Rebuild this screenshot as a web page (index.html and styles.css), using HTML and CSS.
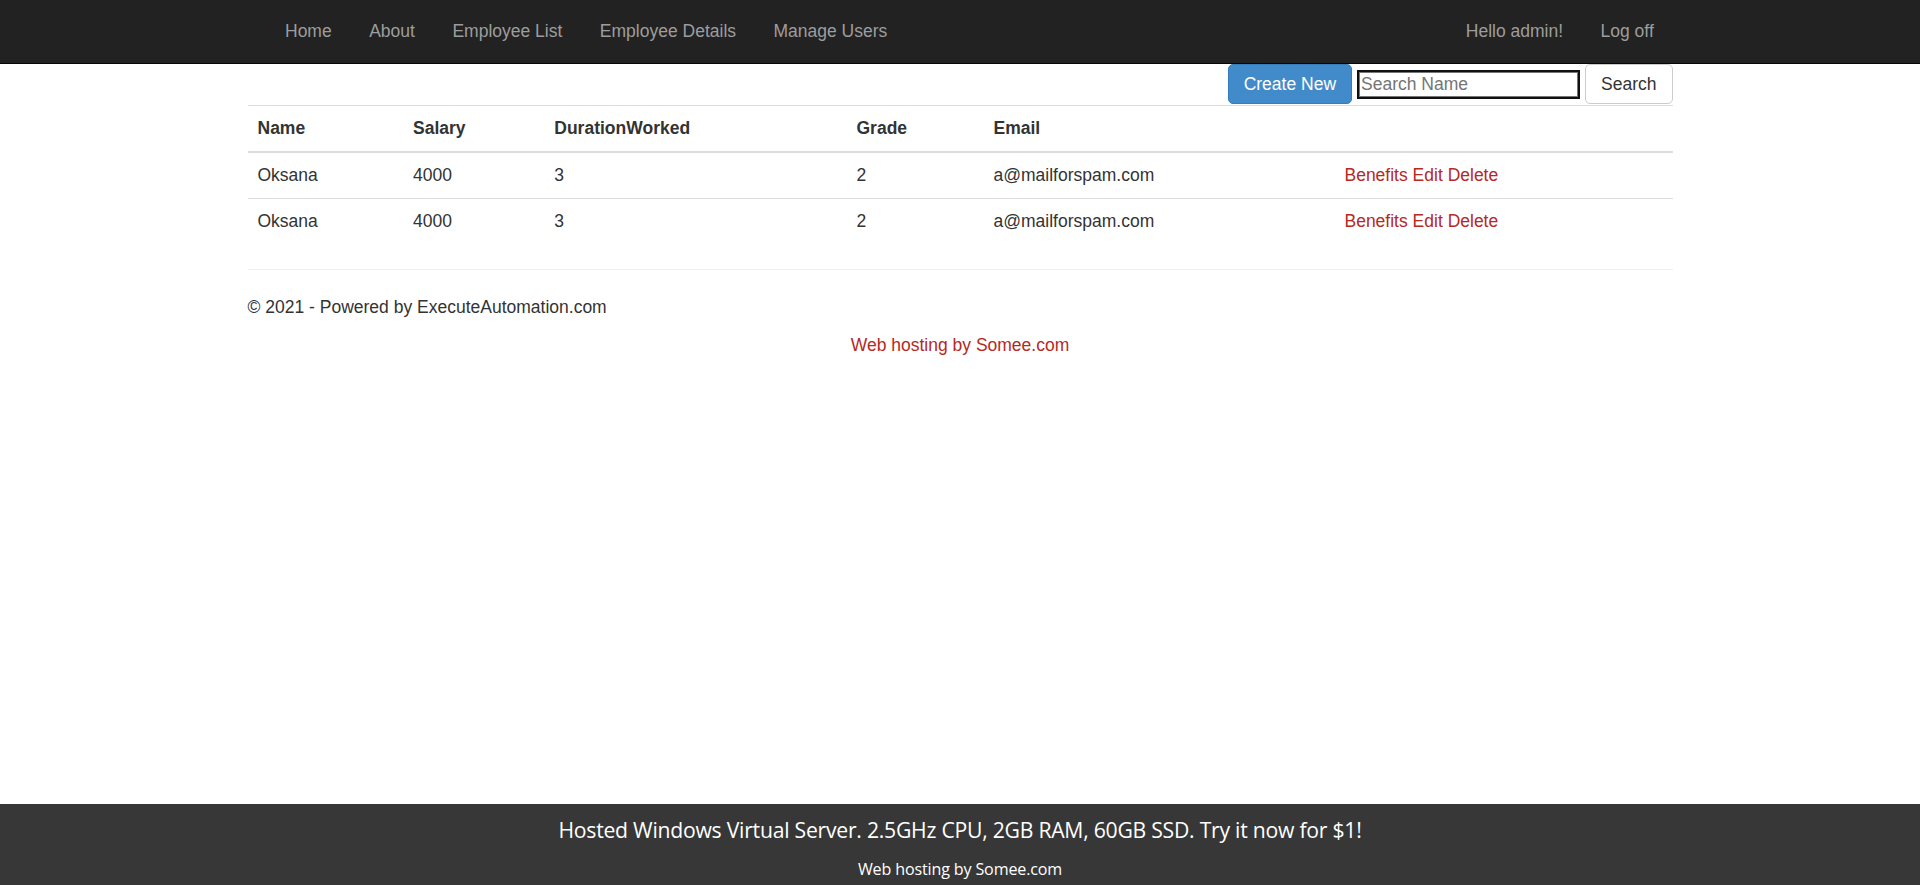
FILE: index.html
```html
<!DOCTYPE html>
<html lang="en">
<head>
<meta charset="utf-8">
<title>Employee List</title>
<link rel="stylesheet" href="styles.css">
</head>
<body>
<div class="page">
  <nav class="navbar">
    <div class="container nav-inner">
      <ul class="nav">
        <li><a href="#">Home</a></li>
        <li><a href="#">About</a></li>
        <li><a href="#">Employee List</a></li>
        <li><a href="#">Employee Details</a></li>
        <li><a href="#">Manage Users</a></li>
      </ul>
      <ul class="nav nav-right">
        <li><a href="#">Hello admin!</a></li>
        <li><a href="#">Log off</a></li>
      </ul>
    </div>
  </nav>

  <main class="container body-content">
    <form class="toolbar">
      <a class="btn btn-primary" href="#">Create New</a>
      <input class="search-input" type="text" placeholder="Search Name">
      <button class="btn btn-default" type="button">Search</button>
    </form>

    <table class="table">
      <colgroup>
        <col class="c-name"><col class="c-salary"><col class="c-dur"><col class="c-grade"><col class="c-email"><col class="c-act">
      </colgroup>
      <thead>
        <tr><th>Name</th><th>Salary</th><th>DurationWorked</th><th>Grade</th><th>Email</th><th></th></tr>
      </thead>
      <tbody>
        <tr><td>Oksana</td><td>4000</td><td>3</td><td>2</td><td>a@mailforspam.com</td><td><a href="#">Benefits</a> <a href="#">Edit</a> <a href="#">Delete</a></td></tr>
        <tr><td>Oksana</td><td>4000</td><td>3</td><td>2</td><td>a@mailforspam.com</td><td><a href="#">Benefits</a> <a href="#">Edit</a> <a href="#">Delete</a></td></tr>
      </tbody>
    </table>

    <hr class="rule">
    <footer class="site-footer">
      <p>&copy; 2021 - Powered by ExecuteAutomation.com</p>
    </footer>
  </main>

  <div class="somee-link"><a href="#">Web hosting by Somee.com</a></div>

  <div class="ad-bar">
    <div class="ad-title">Hosted Windows Virtual Server. 2.5GHz CPU, 2GB RAM, 60GB SSD. Try it now for $1!</div>
    <div class="ad-sub">Web hosting by Somee.com</div>
  </div>
</div>
</body>
</html>
```

FILE: styles.css
```css
* { box-sizing: border-box; }

html, body {
  margin: 0;
  padding: 0;
}

body {
  font-family: "Liberation Sans", Arial, Helvetica, sans-serif;
  font-size: 17.5px;
  line-height: 25px;
  color: #333;
  background: #fff;
}

a {
  color: #b5291f;
  text-decoration: none;
}

.page {
  min-height: 100vh;
  display: flex;
  flex-direction: column;
}

.container {
  width: 1462.5px;
  margin: 0 auto;
  padding: 0 18.75px;
}

/* navbar */
.navbar {
  background: #222;
  border-bottom: 1px solid #080808;
  height: 63.5px;
}

.nav-inner {
  display: flex;
  justify-content: space-between;
  padding-left: 37.5px;
}

.nav {
  list-style: none;
  margin: 0;
  padding: 0;
  display: flex;
}

.nav a {
  display: block;
  padding: 18.75px 18.75px;
  line-height: 25px;
  color: #9d9d9d;
}

/* toolbar */
.toolbar {
  display: flex;
  justify-content: flex-end;
  align-items: center;
  gap: 7px;
  height: 41.5px;
  margin: 0;
}

.btn {
  display: inline-block;
  font-family: "Liberation Sans", Arial, sans-serif;
  font-size: 17.5px;
  line-height: 25px;
  padding: 6.25px 15px;
  border: 1.25px solid transparent;
  border-radius: 5px;
  cursor: pointer;
  text-align: center;
  height: 40px;
  margin: 0;
}

.btn-primary {
  background: #428bca;
  border-color: #357ebd;
  color: #fff;
}

.btn-default {
  background: #fff;
  border-color: #ccc;
  color: #333;
}

.search-input {
  width: 219px;
  height: 25px;
  margin: 0;
  padding: 0 1px;
  border: 1px solid #767676;
  box-shadow: 0 0 0 2px #101010;
  font-family: "Liberation Sans", Arial, sans-serif;
  font-size: 17.5px;
  line-height: 21px;
  color: #333;
  outline: none;
  background: #fff;
}

.search-input::placeholder {
  color: #757575;
}

/* table */
.table {
  width: 100%;
  border-collapse: collapse;
  border-spacing: 0;
  table-layout: fixed;
  margin-bottom: 25px;
}

.c-name { width: 155.5px; }
.c-salary { width: 141.3px; }
.c-dur { width: 302.2px; }
.c-grade { width: 137px; }
.c-email { width: 351px; }
.c-act { width: auto; }

.table th,
.table td {
  padding: 10px;
  line-height: 25px;
  text-align: left;
  vertical-align: top;
  border-top: 1.25px solid #ddd;
}

.table th {
  font-weight: bold;
  vertical-align: bottom;
  border-bottom: 2.5px solid #ddd;
}

.table tbody tr:first-child td {
  border-top: 0;
}

.rule {
  margin: 0 0 25px;
  border: 0;
  border-top: 1.25px solid #eee;
  height: 0;
}

.site-footer p {
  margin: 0 0 12.5px;
}

.somee-link {
  text-align: center;
  line-height: 25px;
}

/* ad bar */
.ad-bar {
  margin-top: auto;
  background: #373737;
  color: #fff;
  text-align: center;
  height: 81px;
  padding-top: 12px;
  font-family: "Open Sans", "Noto Sans", sans-serif;
}

.ad-title {
  font-size: 21.2px;
  line-height: 28px;
  letter-spacing: -0.25px;
}

.ad-sub {
  font-size: 16.1px;
  line-height: 22px;
  margin-top: 14px;
  letter-spacing: -0.15px;
}
```
